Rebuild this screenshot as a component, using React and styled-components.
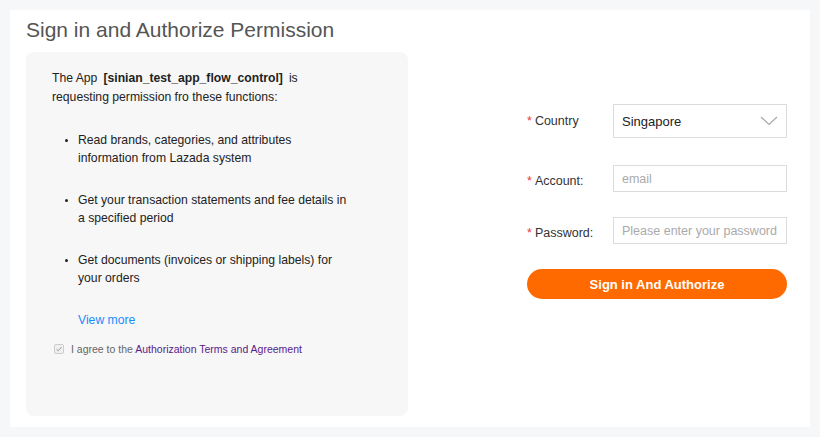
import styled, { createGlobalStyle } from 'styled-components'

const GlobalStyle = createGlobalStyle`
  html, body {
    margin: 0;
    padding: 0;
    background: #f6f7f9;
    font-family: "Liberation Sans", Arial, Helvetica, sans-serif;
  }
  * { box-sizing: border-box; }
`

const Page = styled.div`
  padding: 10px;
  height: 437px;
`
const Card = styled.div`
  background: #fff;
  height: 417px;
  padding: 6px 16px 0 16px;
`
const Title = styled.h1`
  margin: 0 0 8px 0;
  font-size: 21px;
  line-height: 28px;
  font-weight: 400;
  color: #555;
`
const Body = styled.div`
  display: grid;
  grid-template-columns: 382px 1fr;
`
const Panel = styled.div`
  background: #f7f7f7;
  border-radius: 8px;
  height: 364px;
  padding: 17px 26px 0 26px;
  font-size: 12.2px;
  color: #222;
`
const Intro = styled.p`
  margin: 0;
  line-height: 19px;
  width: 300px;
`
const AppName = styled.b`
  padding: 0 6px;
`
const List = styled.ul`
  margin: 24px 0 0 0;
  padding-left: 26px;
  width: 298px;
`
const Item = styled.li`
  line-height: 18px;
  margin-bottom: 24px;
  &::marker {
    font-size: 10px;
  }
`
const ViewMore = styled.a`
  display: block;
  margin-left: 26px;
  color: #1a8cff;
  text-decoration: none;
  line-height: 18px;
`
const Agree = styled.label`
  display: flex;
  align-items: center;
  gap: 7px;
  margin-top: 14px;
  margin-left: 2px;
  font-size: 10.5px;
  color: #666;
`
const Box = styled.span`
  width: 10px;
  height: 10px;
  border: 1px solid #ccc;
  border-radius: 2px;
  background: #f0f0f0;
  display: flex;
  align-items: center;
  justify-content: center;
`
const Terms = styled.a`
  color: #5a1a8a;
  text-decoration: none;
`
const Form = styled.div`
  padding: 52px 0 0 119px;
  width: 379px;
`
const Row = styled.div`
  display: flex;
  align-items: center;
  margin-bottom: ${(p) => p.$gap}px;
`
const Label = styled.div`
  width: 86px;
  font-size: 12.5px;
  color: #333;
  padding-top: ${(p) => p.$down || 0}px;
  &::before {
    content: '*';
    color: #e4393c;
    margin-right: 3px;
  }
`
const Field = styled.div`
  width: 174px;
  height: ${(p) => p.$h}px;
  border: 1px solid #dcdcdc;
  background: #fff;
  display: flex;
  align-items: center;
  justify-content: space-between;
  padding: 0 8px;
  font-size: ${(p) => (p.$value ? 13 : 12.5)}px;
  color: ${(p) => (p.$value ? '#222' : '#aaa')};
`
const Button = styled.button`
  width: 260px;
  height: 30px;
  border: none;
  border-radius: 15px;
  background: #ff6a00;
  color: #fff;
  font-family: inherit;
  font-weight: 700;
  font-size: 13px;
`

const Chevron = () => (
  <svg width="18" height="10" viewBox="0 0 18 10">
    <path d="M1 1 L9 8.5 L17 1" fill="none" stroke="#a8a8a8" strokeWidth="1.2" />
  </svg>
)

const Check = () => (
  <svg width="8" height="8" viewBox="0 0 8 8">
    <path d="M1.5 4.2 L3.2 5.8 L6.5 2" fill="none" stroke="#999" strokeWidth="1" />
  </svg>
)

const App = () => (
  <Page>
    <GlobalStyle />
    <Card>
      <Title>Sign in and Authorize Permission</Title>
      <Body>
        <Panel>
          <Intro>
            The App<AppName>[sinian_test_app_flow_control]</AppName>is requesting
            permission fro these functions:
          </Intro>
          <List>
            <Item>Read brands, categories, and attributes information from Lazada system</Item>
            <Item>Get your transaction statements and fee details in a specified period</Item>
            <Item>Get documents (invoices or shipping labels) for your orders</Item>
          </List>
          <ViewMore>View more</ViewMore>
          <Agree>
            <Box><Check /></Box>
            <span>I agree to the <Terms>Authorization Terms and Agreement</Terms></span>
          </Agree>
        </Panel>
        <Form>
          <Row $gap={27}>
            <Label>Country</Label>
            <Field $h={34} $value>
              Singapore
              <Chevron />
            </Field>
          </Row>
          <Row $gap={25}>
            <Label $down={4}>Account:</Label>
            <Field $h={27}>email</Field>
          </Row>
          <Row $gap={25}>
            <Label $down={4}>Password:</Label>
            <Field $h={27}>Please enter your password</Field>
          </Row>
          <Button>Sign in And Authorize</Button>
        </Form>
      </Body>
    </Card>
  </Page>
)

export default App
